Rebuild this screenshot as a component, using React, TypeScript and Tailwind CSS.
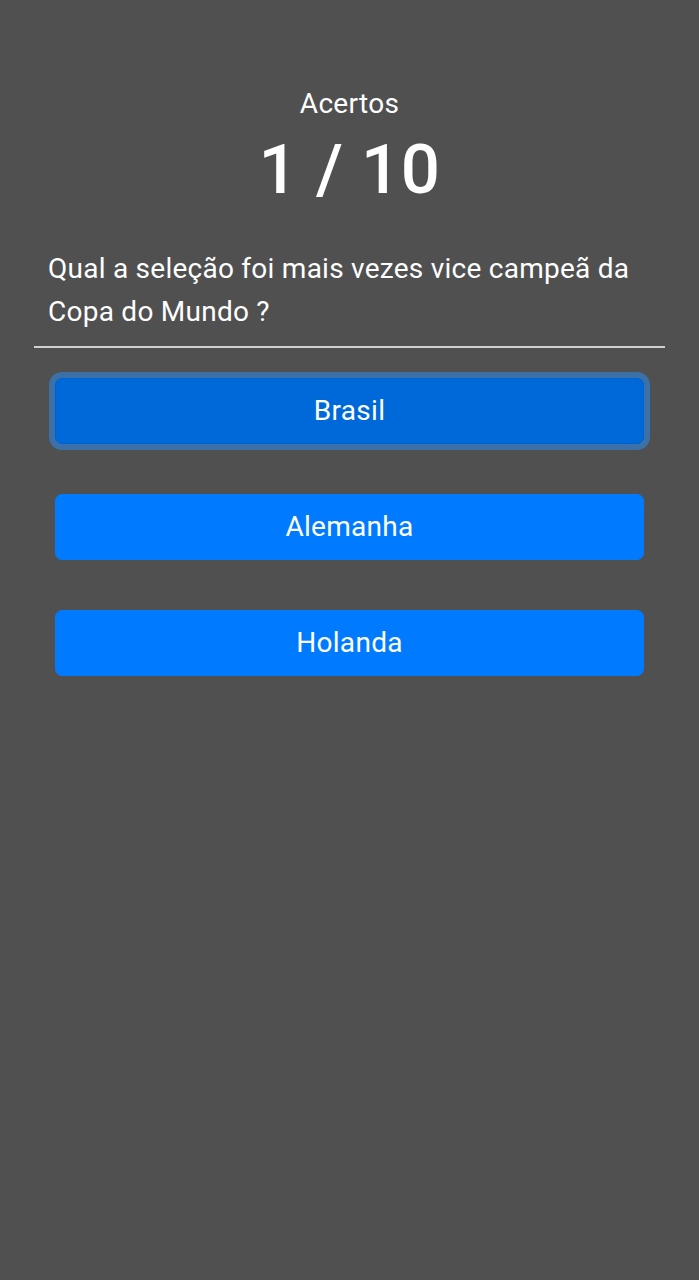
export default function App() {
  const options = [
    { label: "Brasil", active: true },
    { label: "Alemanha", active: false },
    { label: "Holanda", active: false },
  ]

  return (
    <div className="min-h-screen bg-[#505050] text-white font-['Roboto',sans-serif] pt-[88px]">
      <p className="text-center text-[28px] leading-[32px] tracking-[0.3px]">Acertos</p>
      <p className="mt-[10px] text-center text-[69px] leading-[80px] font-medium tracking-[0.5px]">1 / 10</p>

      <p className="mt-[37px] px-[48px] text-[28px] leading-[43px] tracking-[0.25px]">
        Qual a seleção foi mais vezes vice campeã da Copa do Mundo ?
      </p>

      <div className="mt-[13px] mx-[34px] h-[2px] bg-[#d0d0d0]" />

      <div className="mt-[30px] mx-[55px] flex flex-col gap-[50px]">
        {options.map((opt) => (
          <button
            key={opt.label}
            className={
              opt.active
                ? "h-[66px] rounded-[7px] bg-[#0069d9] border border-[#0062cc] shadow-[0_0_0_6px_rgba(38,143,255,0.5)] text-[28px] tracking-[0.3px] text-white"
                : "h-[66px] rounded-[7px] bg-[#007bff] border border-[#007bff] text-[28px] tracking-[0.3px] text-white"
            }
          >
            {opt.label}
          </button>
        ))}
      </div>
    </div>
  )
}
